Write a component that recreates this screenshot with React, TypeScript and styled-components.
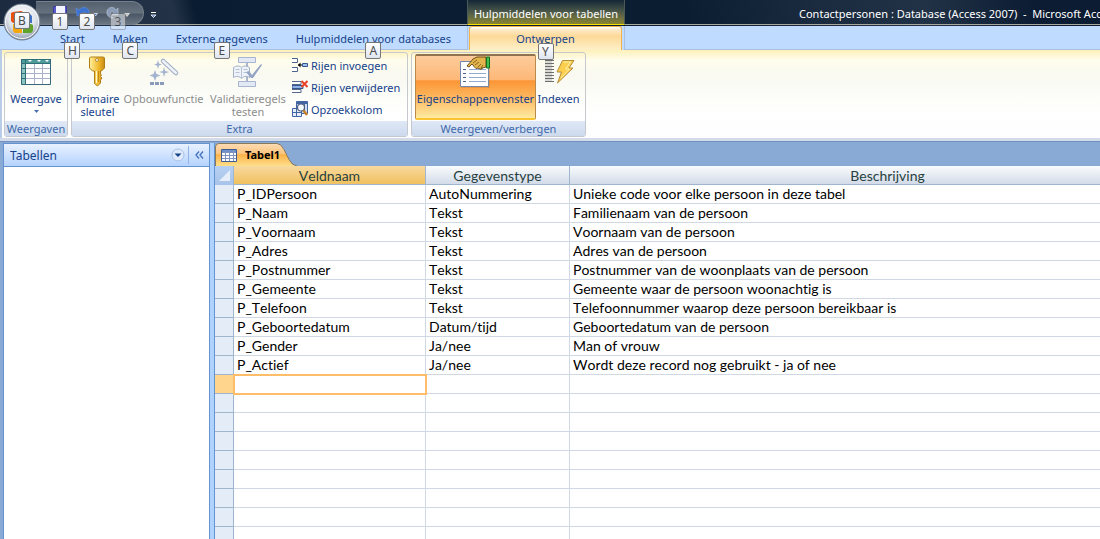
import React from "react";
import styled, { createGlobalStyle, css } from "styled-components";

const UI = `"Noto Sans", "Open Sans", sans-serif`;
const SHEET = `Lato, "Noto Sans", sans-serif`;

const Global = createGlobalStyle`
  *, *::before, *::after { box-sizing: border-box; }
  html, body { margin: 0; height: 100%; overflow: hidden; }
  #root { height: 100%; }
  body { font: 11px/13px ${UI}; background: #8aaad6; color: #15428b; }
  button { font: inherit; color: inherit; background: none; border: 0; padding: 0; margin: 0; }
`;

const Window = styled.div`
  display: flex;
  flex-direction: column;
  height: 100%;
  overflow: hidden;
`;

/* ---------- title bar and tabs ---------- */

const Header = styled.header`
  position: relative;
  display: grid;
  grid-template-columns: 467px 158px minmax(0, 1fr);
  grid-template-rows: 26px 24px;
  background:
    linear-gradient(#a9a89f, #a9a89f) 0 24px / 100% 1px no-repeat,
    linear-gradient(75deg, #1c2b40 0, #233247 16%, #0a1c31 18%, #0a1d33 36%, #0a1d31 62%, #1b2b3f 74%, #223246 84%, #0b1c33 94%) 0 0 / 100% 26px no-repeat,
    #bfdbff;
`;

const QuickBar = styled.div`
  display: flex;
  align-items: flex-start;
  padding-left: 36px;
`;

const QuickPill = styled.div`
  display: flex;
  gap: 7px;
  height: 24px;
  width: 108px;
  margin-top: 1px;
  padding: 2px 0 0 16px;
  border: 1px solid #75808d;
  border-left: 0;
  border-radius: 0 12px 12px 0;
  background: linear-gradient(#566170, #66717e 50%, #4a5665 55%, #6b7682);
`;

const QuickButton = styled.button<{ $wide?: boolean }>`
  position: relative;
  display: flex;
  align-items: flex-start;
  width: ${(p) => (p.$wide ? 24 : 16)}px;
  height: 18px;
  svg { flex: none; }
`;

const QuickMore = styled.button`
  width: 10px;
  height: 10px;
  margin: 8px 0 0 4px;
`;

const KeyTip = styled.kbd<{ $faded?: boolean; $low?: boolean }>`
  position: absolute;
  z-index: 3;
  left: 50%;
  top: ${(p) => (p.$low ? 16 : 9)}px;
  width: 16px;
  height: 17px;
  margin-left: -8px;
  border: 1px solid #767676;
  border-radius: 2px;
  background: linear-gradient(#ffffff, #dfe5f0);
  color: #4c4c4c;
  font: 12px/15px ${UI};
  text-align: center;
  opacity: ${(p) => (p.$faded ? 0.5 : 1)};
`;

const Orb = styled.button`
  position: absolute;
  z-index: 2;
  left: 3px;
  top: 3px;
  width: 38px;
  height: 38px;
  svg { display: block; }
`;

const ContextTitle = styled.div`
  height: 25px;
  padding-top: 5px;
  border: solid #4a5a55;
  border-width: 0 1px;
  border-bottom: 1px solid #f5e200;
  background: linear-gradient(rgba(60, 75, 70, 0.2), #4d5a4a 50%, #8a8532);
  color: #fff;
  font: 11px/17px ${UI};
  text-align: center;
  white-space: nowrap;
`;

const WindowTitle = styled.div`
  padding: 5px 0 0 174px;
  color: #fff;
  font: 11px/17px ${UI};
  white-space: pre;
  overflow: hidden;
`;

const Tabs = styled.nav`
  display: flex;
  padding-left: 46px;
  border-bottom: 1px solid #a9bfdc;
`;

const Tab = styled.button<{ $active?: boolean }>`
  position: relative;
  height: 23px;
  padding: 0 14px;
  line-height: 26px;
  white-space: nowrap;
  color: #15428b;
  ${(p) =>
    p.$active &&
    css`
      width: 153px;
      height: 24px;
      margin-left: 1px;
      border: 1px solid #f2b44a;
      border-bottom: 0;
      border-radius: 3px 3px 0 0;
      background: linear-gradient(#fff 0, #fde9c4 3px, #fdd998 40%, #fdf0c8);
      line-height: 24px;
    `}
`;

const ContextTabs = styled.div`
  border: solid #a8bfe0;
  border-width: 0 1px;
`;

const TabRest = styled.div`
  border-bottom: 1px solid #a9bfdc;
`;

/* ---------- ribbon ---------- */

const Ribbon = styled.section`
  flex: none;
  height: 91px;
  padding: 2px 0 0 4px;
  border-bottom: 3px solid #d3dae8;
  background: linear-gradient(#fdf0b8, #fffdec 10px, #f9f9f1 24px, #ffffff 75%, #fdfdff);
  box-shadow: inset 2px 0 #b9cde8, 0 1px #7090c0;
  display: flex;
  gap: 3px;
  align-items: flex-start;
`;

const Group = styled.div<{ $width: number }>`
  display: flex;
  flex-direction: column;
  width: ${(p) => p.$width}px;
  height: 85px;
  border: 1px solid #c5c8cc;
  border-radius: 3px;
  overflow: hidden;
`;

const GroupBody = styled.div`
  flex: 1;
  display: flex;
  padding: 1px 3px 0;
`;

const GroupLabel = styled.div`
  height: 15px;
  background: linear-gradient(#dfe8f6, #ccd9ee);
  color: #3e6aaa;
  font-size: 11px;
  line-height: 15px;
  text-align: center;
`;

const BigButton = styled.button<{ $width: number; $off?: boolean; $on?: boolean }>`
  display: flex;
  flex-direction: column;
  align-items: center;
  flex: none;
  width: ${(p) => p.$width}px;
  height: 66px;
  padding-top: 2px;
  white-space: nowrap;
  color: ${(p) => (p.$off ? "#8d8d8d" : "#15428b")};
  svg { display: block; flex: none; }
  ${(p) =>
    p.$on &&
    css`
      border: 1px solid #b98a4a;
      border-top: 2px solid #8f7350;
      border-bottom: 2px solid #fbc532;
      border-radius: 2px;
      padding-top: 0;
      background: linear-gradient(#fccb9b, #fdb878 38%, #fb9636 40%, #fdb55c 65%, #feeaa0);
    `}
`;

const BigLabel = styled.span`
  margin-top: 4px;
  line-height: 13px;
`;

const SmallList = styled.div`
  display: flex;
  flex-direction: column;
  padding-left: 3px;
`;

const SmallButton = styled.button`
  display: flex;
  align-items: center;
  gap: 3px;
  height: 22px;
  white-space: nowrap;
`;

/* ---------- workspace ---------- */

const Work = styled.main`
  flex: 1;
  min-height: 0;
  display: flex;
  padding: 2px 0 0 3px;
`;

const Pane = styled.aside`
  flex: none;
  width: 207px;
  background: #fff;
  border: 1px solid #6593cf;
  border-bottom: 0;
`;

const PaneHead = styled.div`
  display: flex;
  align-items: center;
  height: 23px;
  padding-left: 6px;
  border-bottom: 1px solid #6593cf;
  background: linear-gradient(#e8f1ff, #b5d3ff);
`;

const PaneTitle = styled.h2`
  flex: 1;
  margin: 0;
  font: 12px/17px ${UI};
`;

const PaneButton = styled.button<{ $split?: boolean }>`
  display: flex;
  align-items: center;
  justify-content: center;
  width: 21px;
  height: 18px;
  border-left: ${(p) => (p.$split ? "1px solid #8fb3e6" : "0")};
`;

const Splitter = styled.div`
  flex: none;
  width: 5px;
  background: #afd2ff;
  border-right: 1px solid #6593cf;
`;

const Doc = styled.section`
  flex: 1;
  min-width: 0;
  display: flex;
  flex-direction: column;
`;

const DocTabs = styled.div`
  height: 23px;
`;

const DocTab = styled.button`
  position: relative;
  width: 82px;
  height: 23px;
  padding-left: 6px;
  color: #000;
  font: bold 11px/22px ${UI};
`;

const DocShape = styled.svg`
  position: absolute;
  left: 0;
  top: 0;
`;

const DocLabel = styled.span`
  position: relative;
  display: flex;
  align-items: center;
  gap: 8px;
`;

const SheetView = styled.div`
  flex: 1;
  min-height: 0;
  overflow: hidden;
  background: #fff;
`;

const Sheet = styled.table`
  width: 991px;
  table-layout: fixed;
  border-collapse: separate;
  border-spacing: 0;
  color: #000;
  font: 14px/18px ${SHEET};
  font-kerning: none;
  font-variant-ligatures: none;
`;

const HeadCell = styled.th<{ $active?: boolean }>`
  height: 19px;
  padding: 0;
  border-right: 1px solid #9eb6ce;
  border-bottom: 1px solid #9eb6ce;
  background: ${(p) =>
    p.$active ? "linear-gradient(#f9d99f, #f1c15f)" : "linear-gradient(#f9fcfd, #d3dbe9)"};
  color: #27413e;
  font-weight: normal;
  line-height: 17px;
`;

const Corner = styled.td`
  padding: 0;
  height: 19px;
  border-right: 1px solid #9eb6ce;
  background: linear-gradient(#b5d0f2, #a9c4e9);
  svg { display: block; }
`;

const Selector = styled.td<{ $active?: boolean }>`
  height: 19px;
  padding: 0;
  border-right: 1px solid #9eb6ce;
  border-bottom: 1px solid #9eb6ce;
  background: ${(p) => (p.$active ? "#ffd58d" : "#e4ecf7")};
`;

const Cell = styled.td<{ $active?: boolean }>`
  height: 19px;
  padding: 0 0 0 3px;
  border-right: 1px solid #d0d7e5;
  border-bottom: 1px solid #d0d7e5;
  white-space: nowrap;
  overflow: hidden;
  ${(p) =>
    p.$active &&
    css`
      position: relative;
      outline: 2px solid #ffbd69;
      outline-offset: -1px;
    `}
`;

/* ---------- drawings ---------- */

const OrbIcon = () => (
  <svg width="38" height="38" viewBox="0 0 38 38">
    <defs>
      <radialGradient id="orb" cx="50%" cy="35%" r="65%">
        <stop offset="0" stopColor="#fff" />
        <stop offset=".6" stopColor="#dfe3ea" />
        <stop offset="1" stopColor="#8d99ab" />
      </radialGradient>
    </defs>
    <circle cx="19" cy="19" r="18" fill="url(#orb)" stroke="#707c8c" />
    <circle cx="19" cy="19" r="16.5" fill="none" stroke="#f5f7fa" />
    <path d="M8 10l2-1 8-1q2 0 2 2v8l-10 2-2-2z" fill="#e8500f" />
    <path d="M21 11h6l2 2v7h-8z" fill="#3f74c9" />
    <path d="M10 21h9v9h-7l-2-2z" fill="#f7a70e" />
    <path d="M20 21h8l2 1v6l-2 2h-8z" fill="#5fa32b" />
  </svg>
);

const SaveIcon = () => (
  <svg width="16" height="16" viewBox="0 0 16 16">
    <path d="M1.500 2.500h13v12H2.500l-1-1z" fill="#5a5cc8" stroke="#3b3c9d" />
    <path d="M4 2h9v8H4z" fill="#f2f5ff" />
    <path d="M4 11h8v4H4z" fill="#cfd3e8" />
  </svg>
);

const UndoIcon = () => (
  <svg width="24" height="16" viewBox="0 0 24 16">
    <path d="M1 4l1 8h8L7.500 9.500C8.500 7 10.500 7 10.500 10c0 2-1 3-2.500 4h2c4-2 5-5 3.500-8C11.500 2.500 7 2.500 4 6z" fill="#3e72cf" stroke="#5d8ee0" strokeWidth=".6" />
    <path d="M18.500 9.500h4l-2 2.500z" fill="#3e72cf" stroke="#fff" strokeWidth=".7" />
  </svg>
);

const RedoIcon = () => (
  <svg width="24" height="16" viewBox="0 0 24 16">
    <path d="M12 4v7H6l2-2C7 7 4.500 7 4.500 10c0 2 1 3 2.500 4H5C1 12 0 9 1.500 6 3.500 2.500 8 2.500 10 6z" fill="#8a9cb8" stroke="#b4c0d2" strokeWidth=".7" />
    <path d="M18.500 9.500h5l-2.500 3z" fill="#c5c5c5" stroke="#fff" strokeWidth=".6" />
  </svg>
);

const MoreIcon = () => (
  <svg width="7" height="8" viewBox="0 0 7 8">
    <path d="M1 1.500h5" stroke="#fff" />
    <path d="M1 4h5L3.500 6.500z" fill="#4d74bf" stroke="#fff" strokeWidth=".8" />
  </svg>
);

const GridIcon = () => (
  <svg width="32" height="32" viewBox="0 0 32 32">
    <path d="M1 3h30v26H1z" fill="#fff" />
    <path d="M1 3h30v4H1z" fill="#4f9a9a" />
    <path d="M1 7h4v22H1z" fill="#8cc4c2" />
    <path d="M8 4h4l-2 2zM17 4h4l-2 2zM25 4h4l-2 2z" fill="#fff" />
    <path d="M5.500 12.500h25M5.500 17.500h25M5.500 22.500h25M14.500 7v21M22.500 7v21" stroke="#a9b0c8" />
    <path d="M1 12.500h4M1 17.500h4M1 22.500h4M1 7.500h30M5.500 3v26" stroke="#2f6f77" />
    <path d="M1 3.500h30" stroke="#2f6f77" />
    <path d="M1.500 3v25.500h29V3" fill="none" stroke="#35687a" />
  </svg>
);

const KeyIcon = () => (
  <svg width="32" height="32" viewBox="0 0 32 32">
    <defs>
      <linearGradient id="gold">
        <stop offset="0" stopColor="#fff0a0" />
        <stop offset=".6" stopColor="#f0b92e" />
        <stop offset="1" stopColor="#c98a12" />
      </linearGradient>
    </defs>
    <path d="M7.500 2l1-1h13l1 1v10l-3 3h-1v3l1 1-1 1.500 1.500 1.500-1.500 2v3l-3 3-3-2.500V15h-2l-3-3z" fill="url(#gold)" stroke="#b17e14" />
    <path d="M14.500 15v12" stroke="#fff8cf" />
    <path d="M16.500 15v11" stroke="#c28a1a" />
    <circle cx="15" cy="4" r="1.500" fill="#fff" stroke="#9a6a10" strokeWidth=".7" />
  </svg>
);

const WandIcon = () => (
  <svg width="32" height="32" viewBox="0 0 32 32">
    <path d="M15 5l13 12" stroke="#9fadc4" strokeWidth="4.500" strokeLinecap="round" />
    <path d="M15 5l13 12" stroke="#eef2f8" strokeWidth="2.500" strokeLinecap="round" />
    <path d="M10 4l1 3.500 3 1-3 1-1 3.500-1-3.500-3-1 3-1zM7 14l1.500 4 4 1.500-4 1.500L7 25l-1.500-4-4-1.500 4-1.500zM16 11l1.200 4 4 1-4 1.200L16 21l-1-4-4-1 4-1z" fill="#a3b4d0" />
    <path d="M2 27.500h4M7 27.500h4M12 27.500h4" stroke="#8a9aba" strokeWidth="3" />
  </svg>
);

const ValidateIcon = () => (
  <svg width="32" height="32" viewBox="0 0 32 32">
    <path d="M15 7v18" stroke="#a9b5cc" strokeWidth="2" />
    <path d="M6.500 1.500h17v5h-17zM6.500 25.500h17v5h-17z" fill="#e3e9f4" stroke="#a9b5d0" />
    <path d="M1.500 11.500c3-2 6-2 8 0 2-2 5-2 8 0v10c-3-2-6-1-8 1-2-2-5-3-8-1z" fill="#eef2f9" stroke="#a3b0ca" />
    <path d="M9.500 11.500v11M3.500 13.500h4M3.500 16.500h4M11.500 13.500h4M11.500 16.500h4" stroke="#b7c2d8" />
    <path d="M14 16l3-1 3 4 9-11 1 1-9 13h-2z" fill="#93a4c4" />
  </svg>
);

const SheetHandIcon = () => (
  <svg width="32" height="32" viewBox="0 0 32 32">
    <path d="M1 32h28V8" fill="none" stroke="#9a6a3a" strokeOpacity=".5" />
    <path d="M.5 5.500h28v25H.5z" fill="#fff" stroke="#7388ab" />
    <path d="M3 13.500h3M3 17.500h3M3 21.500h3M3 25.500h3" stroke="#4e6285" />
    <path d="M9 13.500h17M9 17.500h17M9 21.500h17M9 25.500h17" stroke="#94a9cf" />
    <path d="M7 10l6-7 4-2h9v10l-4 1v1h-2l-2-1-2 .5-2-2-1-1.500-1-1-3 3z" fill="#e3b54c" stroke="#5e430f" strokeWidth=".9" />
    <path d="M13 7l4-3M15 9l4-3M18 11l3-3M21 12l2-3" stroke="#5e430f" strokeWidth=".7" />
    <path d="M26.500 1v11h3V1z" fill="#3fc050" stroke="#14701d" />
  </svg>
);

const IndexIcon = () => (
  <svg width="32" height="32" viewBox="0 0 32 32">
    <path d="M2 4.500h9M2 7.500h9M2 10.500h9M2 13.500h9M2 16.500h9M2 19.500h9M2 22.500h9M2 25.500h9" stroke="#6d6d6d" />
    <path d="M2 6h7M2 9h7M2 12h7M2 15h7M2 18h7M2 21h7M2 24h7" stroke="#b5b5b5" />
    <path d="M19.500 4.500H31L26 12h4L14.500 27l4-11H14z" fill="#fbcf4d" stroke="#b08430" strokeWidth=".9" />
    <path d="M20.500 6h7l-5 7h4L18 22" fill="none" stroke="#fff0a8" />
  </svg>
);

const InsertIcon = () => (
  <svg width="16" height="16" viewBox="0 0 16 16">
    <path d="M0 1.500h5.500v4H0M0 10.500h5.500v4H0" fill="#fff" stroke="#4d668c" />
    <path d="M6 8h5" stroke="#000" />
    <path d="M8.500 5.500v5L6 8z" fill="#000" />
    <path d="M10.500 6.500h5v3h-5z" fill="#9dc0f0" stroke="#36568c" />
  </svg>
);

const DeleteIcon = () => (
  <svg width="16" height="16" viewBox="0 0 16 16">
    <path d="M0 2.500h9v3H0M0 10.500h9v3H0" fill="#fff" stroke="#54698c" />
    <path d="M0 6.500h11v3H0z" fill="#8db3e8" stroke="#36568c" />
    <path d="M9.500 2l6 6M15.500 2l-6 6" stroke="#e8422a" strokeWidth="2" />
  </svg>
);

const LookupIcon = () => (
  <svg width="16" height="16" viewBox="0 0 16 16">
    <path d="M4.500.5h11v12h-11z" fill="#cfdef5" stroke="#4365a3" />
    <path d="M4 1h11v2H4z" fill="#4365a3" />
    <path d="M.5 7.500h9v8h-9z" fill="#e6eefb" stroke="#4365a3" />
    <path d="M.5 11.500h9M4.500 7v8M12.500 1v11" stroke="#4365a3" />
    <circle cx="9" cy="6.500" r="3.500" fill="#f4f9ff" stroke="#50607c" strokeWidth="1.200" />
    <path d="M11.500 9.500l3.500 4.500" stroke="#c98227" strokeWidth="2.500" />
  </svg>
);

const TableIcon = () => (
  <svg width="16" height="14" viewBox="0 0 16 14">
    <path d="M.5 1.500h15v12H.5z" fill="#fff" stroke="#3c5a94" />
    <path d="M1 2h14v2H1z" fill="#6d8fca" />
    <path d="M1 4.500h14M1 7.500h14M1 10.500h14M4.500 2v11M8.500 2v11M12.500 2v11" stroke="#7f95bd" />
  </svg>
);

/* ---------- data ---------- */

const fields = [
  ["P_IDPersoon", "AutoNummering", "Unieke code voor elke persoon in deze tabel"],
  ["P_Naam", "Tekst", "Familienaam van de persoon"],
  ["P_Voornaam", "Tekst", "Voornaam van de persoon"],
  ["P_Adres", "Tekst", "Adres van de persoon"],
  ["P_Postnummer", "Tekst", "Postnummer van de woonplaats van de persoon"],
  ["P_Gemeente", "Tekst", "Gemeente waar de persoon woonachtig is"],
  ["P_Telefoon", "Tekst", "Telefoonnummer waarop deze persoon bereikbaar is"],
  ["P_Geboortedatum", "Datum/tijd", "Geboortedatum van de persoon"],
  ["P_Gender", "Ja/nee", "Man of vrouw"],
  ["P_Actief", "Ja/nee", "Wordt deze record nog gebruikt - ja of nee"],
];
const emptyRows = Array.from({ length: 30 }, (_, i) => i);

const tabs: [string, string][] = [
  ["Start", "H"],
  ["Maken", "C"],
  ["Externe gegevens", "E"],
  ["Hulpmiddelen voor databases", "A"],
];

export default function App() {
  return (
    <Window>
      <Global />
      <Header>
        <Orb aria-label="Office-knop"><OrbIcon /><KeyTip>B</KeyTip></Orb>
        <QuickBar>
          <QuickPill>
            <QuickButton aria-label="Opslaan"><SaveIcon /><KeyTip>1</KeyTip></QuickButton>
            <QuickButton $wide aria-label="Ongedaan maken"><UndoIcon /><KeyTip>2</KeyTip></QuickButton>
            <QuickButton $wide aria-label="Opnieuw"><RedoIcon /><KeyTip $faded>3</KeyTip></QuickButton>
          </QuickPill>
          <QuickMore aria-label="Werkbalk aanpassen"><MoreIcon /></QuickMore>
        </QuickBar>
        <ContextTitle>Hulpmiddelen voor tabellen</ContextTitle>
        <WindowTitle>{"Contactpersonen : Database (Access 2007)  -  Microsoft Access"}</WindowTitle>
        <Tabs>
          {tabs.map(([label, key]) => (
            <Tab key={key}>{label}<KeyTip $low>{key}</KeyTip></Tab>
          ))}
        </Tabs>
        <ContextTabs><Tab $active>Ontwerpen<KeyTip $low>Y</KeyTip></Tab></ContextTabs>
        <TabRest />
      </Header>

      <Ribbon>
        <Group $width={64}>
          <GroupBody>
            <BigButton $width={56}>
              <GridIcon />
              <BigLabel>Weergave</BigLabel>
              <svg width="5" height="9" viewBox="0 0 5 9"><path d="M0 5h5L2.500 8z" fill="#4a6fae" /></svg>
            </BigButton>
          </GroupBody>
          <GroupLabel>Weergaven</GroupLabel>
        </Group>
        <Group $width={337}>
          <GroupBody>
            <BigButton $width={45}><KeyIcon /><BigLabel>Primaire<br />sleutel</BigLabel></BigButton>
            <BigButton $width={87} $off><WandIcon /><BigLabel>Opbouwfunctie</BigLabel></BigButton>
            <BigButton $width={82} $off><ValidateIcon /><BigLabel>Validatieregels<br />testen</BigLabel></BigButton>
            <SmallList>
              <SmallButton><InsertIcon />Rijen invoegen</SmallButton>
              <SmallButton><DeleteIcon />Rijen verwijderen</SmallButton>
              <SmallButton><LookupIcon />Opzoekkolom</SmallButton>
            </SmallList>
          </GroupBody>
          <GroupLabel>Extra</GroupLabel>
        </Group>
        <Group $width={175}>
          <GroupBody>
            <BigButton $width={121} $on><SheetHandIcon /><BigLabel>Eigenschappenvenster</BigLabel></BigButton>
            <BigButton $width={45}><IndexIcon /><BigLabel>Indexen</BigLabel></BigButton>
          </GroupBody>
          <GroupLabel>Weergeven/verbergen</GroupLabel>
        </Group>
      </Ribbon>

      <Work>
        <Pane>
          <PaneHead>
            <PaneTitle>Tabellen</PaneTitle>
            <PaneButton aria-label="Categorie kiezen">
              <svg width="14" height="14" viewBox="0 0 14 14">
                <circle cx="7" cy="7" r="6" fill="#dfebfc" stroke="#a9c1e6" />
                <path d="M3.500 5.500h7L7 9z" fill="#15428b" />
              </svg>
            </PaneButton>
            <PaneButton $split aria-label="Paneel inklappen">
              <svg width="9" height="8" viewBox="0 0 9 8">
                <path d="M4 .5L1 4l3 3.500M8 .5L5 4l3 3.500" fill="none" stroke="#3f6fb8" strokeWidth="1.300" />
              </svg>
            </PaneButton>
          </PaneHead>
        </Pane>
        <Splitter />
        <Doc>
          <DocTabs>
            <DocTab>
              <DocShape width="82" height="23" viewBox="0 0 82 23">
                <defs>
                  <linearGradient id="tab" x2="0" y2="1">
                    <stop offset="0" stopColor="#fddcb4" />
                    <stop offset=".45" stopColor="#fdc47e" />
                    <stop offset=".5" stopColor="#fdb24a" />
                    <stop offset="1" stopColor="#fde08a" />
                  </linearGradient>
                </defs>
                <path d="M.5 23V4Q.5.500 4 .5h58q4 0 7 6l5 10q3 6 8 6.500" fill="url(#tab)" stroke="#8a7a5c" />
              </DocShape>
              <DocLabel><TableIcon />Tabel1</DocLabel>
            </DocTab>
          </DocTabs>
          <SheetView>
            <Sheet>
              <colgroup>
                <col style={{ width: 19 }} />
                <col style={{ width: 192 }} />
                <col style={{ width: 144 }} />
                <col style={{ width: 636 }} />
              </colgroup>
              <thead>
                <tr>
                  <Corner><svg width="18" height="19" viewBox="0 0 18 19"><path d="M15 4v11H4z" fill="#e6eef9" /></svg></Corner>
                  <HeadCell $active scope="col">Veldnaam</HeadCell>
                  <HeadCell scope="col">Gegevenstype</HeadCell>
                  <HeadCell scope="col">Beschrijving</HeadCell>
                </tr>
              </thead>
              <tbody>
                {fields.map(([name, type, text]) => (
                  <tr key={name}><Selector /><Cell>{name}</Cell><Cell>{type}</Cell><Cell>{text}</Cell></tr>
                ))}
                {emptyRows.map((i) => (
                  <tr key={i}><Selector $active={i === 0} /><Cell $active={i === 0} /><Cell /><Cell /></tr>
                ))}
              </tbody>
            </Sheet>
          </SheetView>
        </Doc>
      </Work>
    </Window>
  );
}
